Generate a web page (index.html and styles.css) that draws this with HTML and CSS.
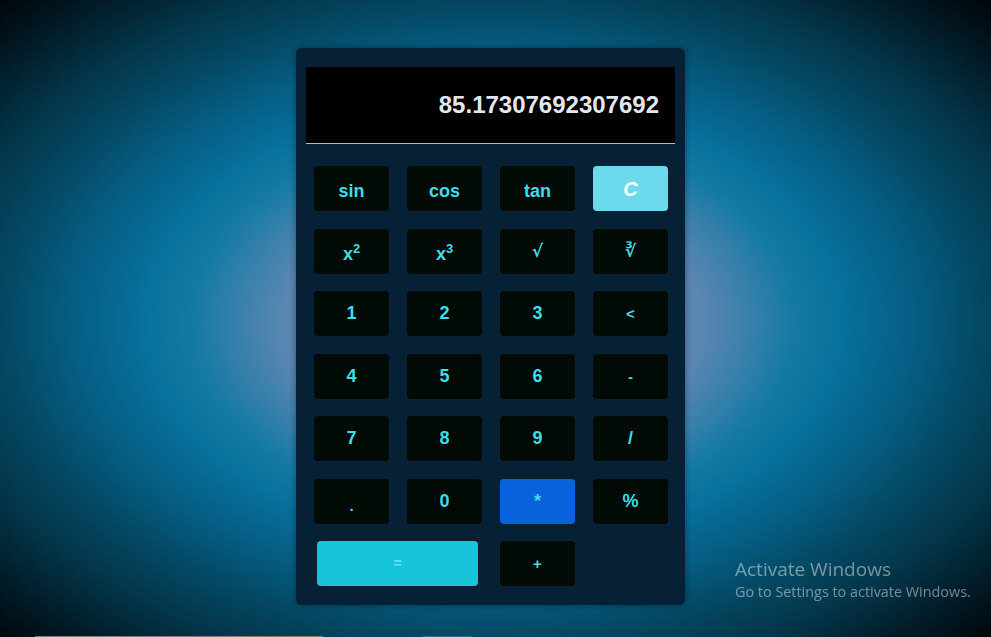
FILE: index.html
```html
<!DOCTYPE html>
<html lang="en">
<head>
<meta charset="utf-8">
<title>Calculator</title>
<link rel="stylesheet" href="styles.css">
</head>
<body>
<main class="stage">
  <section class="calc">
    <div class="display">85.17307692307692</div>
    <div class="keys">
      <button class="key key-word">sin</button>
      <button class="key key-word">cos</button>
      <button class="key key-word">tan</button>
      <button class="key key-clear">C</button>
      <button class="key key-word">x<sup>2</sup></button>
      <button class="key key-word">x<sup>3</sup></button>
      <button class="key key-sym">√</button>
      <button class="key key-sym">∛</button>
      <button class="key">1</button>
      <button class="key">2</button>
      <button class="key">3</button>
      <button class="key key-small">&lt;</button>
      <button class="key">4</button>
      <button class="key">5</button>
      <button class="key">6</button>
      <button class="key key-small">-</button>
      <button class="key">7</button>
      <button class="key">8</button>
      <button class="key">9</button>
      <button class="key">/</button>
      <button class="key key-dot">.</button>
      <button class="key">0</button>
      <button class="key key-active">*</button>
      <button class="key">%</button>
      <button class="key key-equals">=</button>
      <button class="key key-small">+</button>
    </div>
  </section>
</main>
<div class="watermark">
  <div class="wm-title">Activate Windows</div>
  <div class="wm-sub">Go to Settings to activate Windows.</div>
</div>
<div class="hbar">
  <span class="hbar-a"></span>
  <span class="hbar-b"></span>
</div>
</body>
</html>
```
FILE: styles.css
```css
html, body {
  margin: 0;
  height: 100%;
}

body {
  overflow: hidden;
  font-family: "Comic Sans MS", "Liberation Sans", sans-serif;
  background: radial-gradient(ellipse 700px 450px at 493px 322px,
    #6a8cb6 0%,
    #5a86b2 30%,
    #3580ab 37%,
    #147aa4 43%,
    #07709c 50%,
    #055e84 60%,
    #044863 70%,
    #033548 80%,
    #021c28 90%,
    #00070b 100%);
}

.stage {
  display: flex;
  justify-content: center;
  padding: 48px 10px 0 0;
}

.calc {
  width: 389px;
  box-sizing: border-box;
  padding: 19px 10px 19px;
  background: #062135;
  border-radius: 6px;
  box-shadow: 0 0 6px rgba(0, 12, 24, 0.45);
}

.display {
  height: 76px;
  background: #000;
  border-bottom: 1px solid #6fd6e6;
  color: #e3e8ef;
  font: bold 24px "Liberation Sans", sans-serif;
  line-height: 76px;
  text-align: right;
  padding-right: 16px;
}

.keys {
  display: grid;
  grid-template-columns: repeat(4, 75px);
  grid-auto-rows: 45px;
  column-gap: 18px;
  row-gap: 17.5px;
  margin: 22px 8px 0;
}

.key {
  border: 0;
  padding: 0;
  border-radius: 4px;
  background: #010a04;
  color: #3fdde6;
  font: bold 18px "Liberation Sans", sans-serif;
  line-height: 45px;
}

.key-word {
  padding-top: 3px;
}

.key sup {
  font-size: 13px;
  line-height: 0;
  vertical-align: 7px;
}

.key-sym {
  font-family: "DejaVu Sans", sans-serif;
  font-size: 17px;
}

.key-small {
  font-size: 15px;
}

.key-dot {
  padding-top: 4px;
  font-size: 15px;
}

.key-clear {
  background: #6dd9ec;
  color: #ffffff;
  font-style: italic;
  font-size: 20px;
  padding-top: 1px;
}

.key-active {
  background: #0762db;
  padding-bottom: 6px;
}

.key-equals {
  grid-column: span 2;
  width: 161px;
  margin-left: 3px;
  background: #17c4da;
  color: #62e3ee;
  font-size: 14px;
}

.watermark {
  position: fixed;
  left: 735px;
  top: 557px;
  font-family: "Open Sans", "Noto Sans", sans-serif;
  color: rgba(255, 255, 255, 0.45);
}

.wm-title {
  font-size: 19px;
  line-height: 25px;
}

.wm-sub {
  font-size: 14.4px;
  line-height: 20px;
}

.hbar {
  position: fixed;
  left: 0;
  right: 0;
  bottom: 0;
  height: 1px;
  display: flex;
}

.hbar-a {
  margin-left: 35px;
  width: 288px;
  background: #7a7a7a;
}

.hbar-b {
  margin-left: 100px;
  width: 48px;
  background: #3d6c82;
}
```
